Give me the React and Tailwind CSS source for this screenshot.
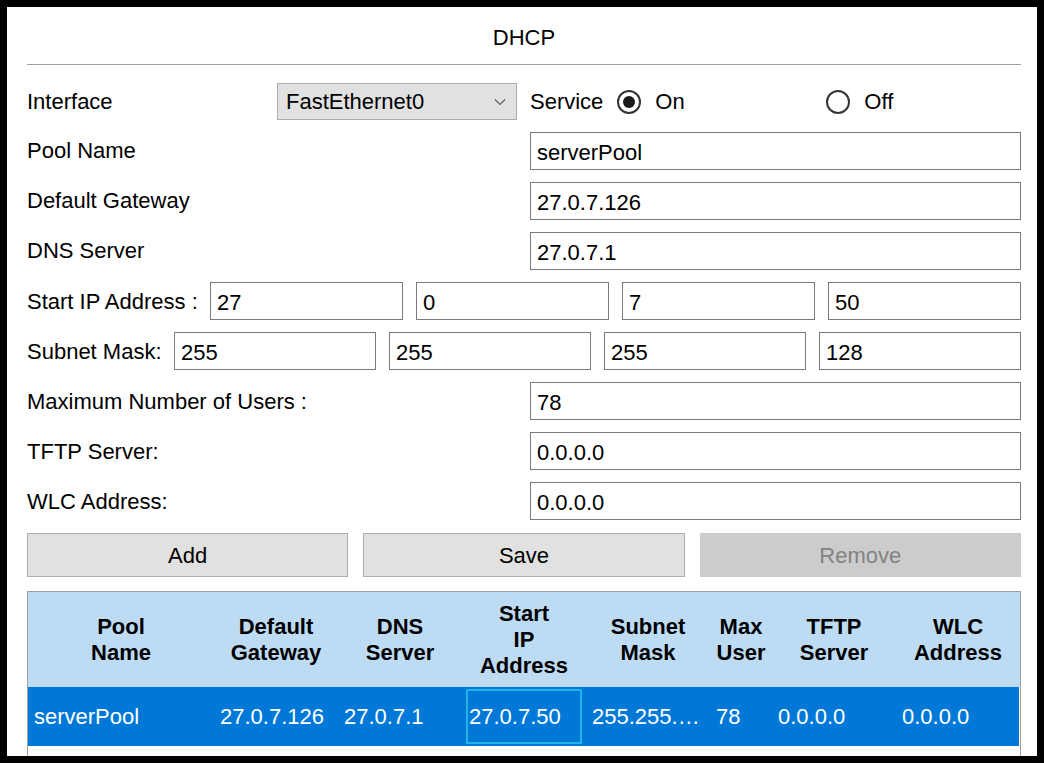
import React from 'react';

const fieldRows = [
  { label: 'Pool Name', value: 'serverPool' },
  { label: 'Default Gateway', value: '27.0.7.126' },
  { label: 'DNS Server', value: '27.0.7.1' },
];

const lowerRows = [
  { label: 'Maximum Number of Users :', value: '78' },
  { label: 'TFTP Server:', value: '0.0.0.0' },
  { label: 'WLC Address:', value: '0.0.0.0' },
];

const columns = [
  ['Pool', 'Name'],
  ['Default', 'Gateway'],
  ['DNS', 'Server'],
  ['Start', 'IP', 'Address'],
  ['Subnet', 'Mask'],
  ['Max', 'User'],
  ['TFTP', 'Server'],
  ['WLC', 'Address'],
];

const rowValues = ['serverPool', '27.0.7.126', '27.0.7.1', '27.0.7.50', '255.255.255.128', '78', '0.0.0.0', '0.0.0.0'];

function TextBox({ value }) {
  return (
    <div className="flex h-full min-w-0 flex-1 items-center border border-[#7a7a7a] bg-white px-[6px] pt-[3px]">
      {value}
    </div>
  );
}

function Radio({ checked }) {
  return (
    <span className="flex h-[24px] w-[24px] shrink-0 items-center justify-center rounded-full border-2 border-[#333333] bg-white">
      {checked ? <span className="h-[12px] w-[12px] rounded-full bg-[#1a1a1a]" /> : null}
    </span>
  );
}

function Button({ children, disabled = false }) {
  return (
    <div
      className={
        disabled
          ? 'flex flex-1 items-center justify-center border border-[#cccccc] bg-[#cccccc] pt-[1px] text-[#838383]'
          : 'flex flex-1 items-center justify-center border border-[#adadad] bg-[#e1e1e1] pt-[1px]'
      }
    >
      {children}
    </div>
  );
}

export default function App() {
  return (
    <div className="h-[763px] w-[1044px] bg-black p-[7px] font-['Liberation_Sans',Arial,sans-serif] text-[22px] leading-[26px] text-black">
      <div className="flex h-full flex-col overflow-hidden bg-white pl-[20px] pr-[16px]">
        <div className="flex h-[58px] shrink-0 items-center justify-center border-b border-[#a0a0a0] pt-[5px]">
          DHCP
        </div>

        <div className="mt-[17px] flex flex-col gap-[12px]">
          <div className="flex h-[38px] items-center pt-[1px]">
            <span className="w-[250px] shrink-0">Interface</span>
            <div className="flex h-full w-[240px] shrink-0 items-center justify-between border border-[#adadad] bg-[#e1e1e1] pl-[8px] pr-[10px]">
              <span>FastEthernet0</span>
              <svg width="12" height="8" viewBox="0 0 12 8" fill="none">
                <path d="M1 1.5 L6 6.5 L11 1.5" stroke="#5a5a5a" strokeWidth="1.1" />
              </svg>
            </div>
            <span className="ml-[13px]">Service</span>
            <div className="ml-[14px] flex w-[209px] items-center gap-[14px]">
              <Radio checked />
              <span>On</span>
            </div>
            <div className="flex items-center gap-[14px]">
              <Radio />
              <span>Off</span>
            </div>
          </div>

          {fieldRows.map((row) => (
            <div key={row.label} className="flex h-[38px] items-center">
              <span className="w-[503px] shrink-0">{row.label}</span>
              <TextBox value={row.value} />
            </div>
          ))}

          <div className="flex h-[38px] items-center">
            <span className="w-[183px] shrink-0 pt-[1px]">Start IP Address :</span>
            <div className="flex h-full flex-1 gap-[13px]">
              <TextBox value="27" />
              <TextBox value="0" />
              <TextBox value="7" />
              <TextBox value="50" />
            </div>
          </div>

          <div className="flex h-[38px] items-center">
            <span className="w-[147px] shrink-0 pt-[1px]">Subnet Mask:</span>
            <div className="flex h-full flex-1 gap-[13px]">
              <TextBox value="255" />
              <TextBox value="255" />
              <TextBox value="255" />
              <TextBox value="128" />
            </div>
          </div>

          {lowerRows.map((row) => (
            <div key={row.label} className="flex h-[38px] items-center">
              <span className="w-[503px] shrink-0 pt-[1px]">{row.label}</span>
              <TextBox value={row.value} />
            </div>
          ))}
        </div>

        <div className="mt-[13px] flex h-[44px] shrink-0 gap-[15px]">
          <Button>Add</Button>
          <Button>Save</Button>
          <Button disabled>Remove</Button>
        </div>

        <div className="mt-[14px] flex-1 border-x border-t border-[#a0a0a0]">
          <div className="grid h-[95px] grid-cols-[186px_124px_124px_124px_124px_62px_124px_1fr] bg-[#bddbf3] font-bold">
            {columns.map((lines) => (
              <div key={lines.join(' ')} className="flex flex-col items-center justify-center text-center">
                {lines.map((line) => (
                  <span key={line}>{line}</span>
                ))}
              </div>
            ))}
          </div>
          <div className="mr-[1px] grid h-[59px] grid-cols-[186px_124px_124px_124px_124px_62px_124px_1fr] bg-[#0078d7] text-white">
            {rowValues.map((value, index) =>
              index === 3 ? (
                <div key={index} className="px-[4px] py-[2px]">
                  <div className="flex h-full items-center overflow-hidden whitespace-nowrap border-2 border-[#1fb3e6] pl-[1px]">
                    {value}
                  </div>
                </div>
              ) : (
                <div key={index} className="flex min-w-0 items-center px-[6px]">
                  <span className="min-w-0 overflow-hidden text-ellipsis whitespace-nowrap">{value}</span>
                </div>
              )
            )}
          </div>
        </div>
      </div>
    </div>
  );
}
